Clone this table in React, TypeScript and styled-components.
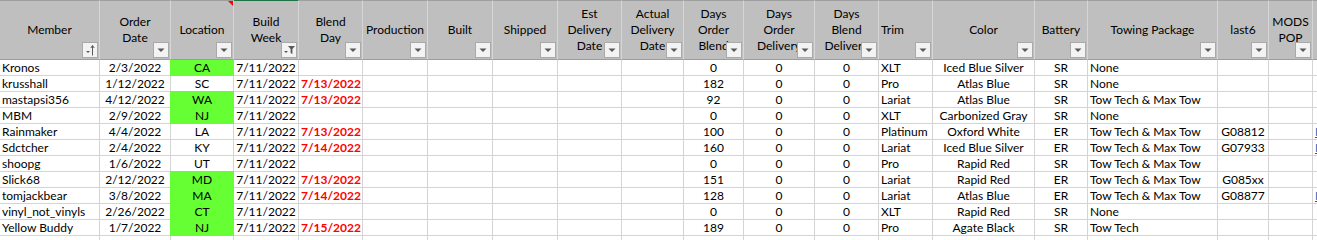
import styled, { createGlobalStyle } from "styled-components";

type Align = "left" | "center";

interface Column {
  lines: string[];
  align: Align;
  headAlign?: Align;
  button?: "sort" | "filter" | "plain" | "none";
}

interface Member {
  name: string;
  ordered: string;
  state: string;
  green: boolean;
  blend: string;
  daysBlend: number;
  trim: string;
  color: string;
  battery: string;
  towing: string;
  last6: string;
  link: boolean;
}

const GREEN = "#66ff33";

const GlobalStyle = createGlobalStyle`
  html, body {
    margin: 0;
    padding: 0;
    background: #ffffff;
    overflow: hidden;
  }
  body {
    font-family: Lato, "Open Sans", sans-serif;
    font-size: 12px;
    color: #000000;
  }
`;

const Sheet = styled.div`
  display: grid;
  grid-template-columns: 100px 71px 63px 65px 64px 65px 65px 65px 64px 62px 60px 71px 64px 54px 102px 53px 130px 51px 44px 1fr;
  grid-template-rows: 60px;
  grid-auto-rows: 16px;
  width: 1317px;
`;

const HeadCell = styled.div<{ $align: Align; $top: string }>`
  position: relative;
  height: 60px;
  box-sizing: border-box;
  background: #bfbfbf;
  border-top: 1px solid ${(p) => p.$top};
  border-bottom: 1px solid #9c9c9c;
  border-right: 1px solid #d6d6d6;
  display: flex;
  flex-direction: column;
  justify-content: center;
  align-items: ${(p) => (p.$align === "left" ? "flex-start" : "center")};
  padding: 0 2px;
  line-height: 15.7px;
  white-space: nowrap;
  overflow: hidden;
`;

const FilterButton = styled.div`
  position: absolute;
  right: 1px;
  bottom: 1px;
  width: 16px;
  height: 16px;
  box-sizing: border-box;
  background: #f3f3f3;
  border: 1px solid #a9a9a9;
  display: flex;
  align-items: center;
  justify-content: center;
`;

const Comment = styled.div`
  position: absolute;
  top: -1px;
  right: 0;
  width: 6px;
  height: 6px;
  background: #ff0000;
  clip-path: polygon(0 0, 100% 0, 100% 100%);
`;

const Cell = styled.div<{ $align: Align; $fill?: string; $first?: boolean }>`
  box-sizing: border-box;
  height: 16px;
  border-right: 1px solid ${(p) => p.$fill ?? "#d4d4d4"};
  border-bottom: 1px solid ${(p) => p.$fill ?? "#d4d4d4"};
  background: ${(p) => p.$fill ?? "transparent"};
  box-shadow: ${(p) =>
    p.$fill
      ? `-1px 0 0 ${p.$fill}${p.$first ? "" : `, 0 -1px 0 ${p.$fill}, -1px -1px 0 ${p.$fill}`}`
      : "none"};
  padding: 0 2px;
  line-height: 15px;
  text-align: ${(p) => p.$align};
  white-space: nowrap;
  overflow: hidden;
`;

const Late = styled.span`
  color: #ff0000;
  font-weight: 700;
`;

const Link = styled.span`
  color: #0563c1;
  text-decoration: underline;
`;

const columns: Column[] = [
  { lines: ["Member"], align: "left", headAlign: "center", button: "sort" },
  { lines: ["Order", "Date"], align: "center" },
  { lines: ["Location"], align: "center" },
  { lines: ["Build", "Week"], align: "center", button: "filter" },
  { lines: ["Blend", "Day"], align: "center" },
  { lines: ["Production"], align: "center" },
  { lines: ["Built"], align: "center" },
  { lines: ["Shipped"], align: "center" },
  { lines: ["Est", "Delivery", "Date"], align: "center" },
  { lines: ["Actual", "Delivery", "Date"], align: "center" },
  { lines: ["Days", "Order", "Blend"], align: "center" },
  { lines: ["Days", "Order", "Delivery"], align: "center" },
  { lines: ["Days", "Blend", "Delivery"], align: "center" },
  { lines: ["Trim"], align: "left" },
  { lines: ["Color"], align: "center" },
  { lines: ["Battery"], align: "center" },
  { lines: ["Towing Package"], align: "left", headAlign: "center" },
  { lines: ["last6"], align: "center" },
  { lines: ["MODS", "POP"], align: "center" },
  { lines: [], align: "left", button: "none" },
];

const m = (
  name: string,
  ordered: string,
  state: string,
  green: boolean,
  blend: string,
  daysBlend: number,
  trim: string,
  color: string,
  battery: string,
  towing: string,
  last6 = "",
  link = false
): Member => ({
  name,
  ordered,
  state,
  green,
  blend,
  daysBlend,
  trim,
  color,
  battery,
  towing,
  last6,
  link,
});

const members: Member[] = [
  m("Kronos", "2/3/2022", "CA", true, "", 0, "XLT", "Iced Blue Silver", "SR", "None"),
  m("krusshall", "1/12/2022", "SC", false, "7/13/2022", 182, "Pro", "Atlas Blue", "SR", "None"),
  m("mastapsi356", "4/12/2022", "WA", true, "7/13/2022", 92, "Lariat", "Atlas Blue", "SR", "Tow Tech & Max Tow"),
  m("MBM", "2/9/2022", "NJ", true, "", 0, "XLT", "Carbonized Gray", "SR", "None"),
  m("Rainmaker", "4/4/2022", "LA", false, "7/13/2022", 100, "Platinum", "Oxford White", "ER", "Tow Tech & Max Tow", "G08812", true),
  m("Sdctcher", "2/4/2022", "KY", false, "7/14/2022", 160, "Lariat", "Iced Blue Silver", "ER", "Tow Tech & Max Tow", "G07933", true),
  m("shoopg", "1/6/2022", "UT", false, "", 0, "Pro", "Rapid Red", "SR", "Tow Tech & Max Tow"),
  m("Slick68", "2/12/2022", "MD", true, "7/13/2022", 151, "Lariat", "Rapid Red", "ER", "Tow Tech & Max Tow", "G085xx"),
  m("tomjackbear", "3/8/2022", "MA", true, "7/14/2022", 128, "Lariat", "Atlas Blue", "ER", "Tow Tech & Max Tow", "G08877", true),
  m("vinyl_not_vinyls", "2/26/2022", "CT", true, "", 0, "XLT", "Rapid Red", "SR", "None"),
  m("Yellow Buddy", "1/7/2022", "NJ", true, "7/15/2022", 189, "Pro", "Agate Black", "SR", "Tow Tech"),
];

function ButtonIcon({ kind }: { kind: "sort" | "filter" | "plain" }) {
  if (kind === "sort") {
    return (
      <svg width="14" height="14" viewBox="0 0 14 14">
        <path d="M3 8h4l-2 2z" fill="#595959" />
        <path d="M9.5 2.5v10" stroke="#595959" strokeWidth="1" />
        <path d="M7.8 5l1.7-2.5L11.2 5" fill="none" stroke="#595959" strokeWidth="1" />
      </svg>
    );
  }
  if (kind === "filter") {
    return (
      <svg width="14" height="14" viewBox="0 0 14 14">
        <path d="M2 8h4l-2 2z" fill="#595959" />
        <path d="M6 3h7l-2.6 3v5l-1.8-1V6z" fill="#595959" />
      </svg>
    );
  }
  return (
    <svg width="14" height="14" viewBox="0 0 14 14">
      <path d="M3.5 5.5h7L7 9z" fill="#595959" />
    </svg>
  );
}

function rowValues(r: Member) {
  return [
    r.name,
    r.ordered,
    r.state,
    "7/11/2022",
    r.blend ? <Late>{r.blend}</Late> : "",
    "",
    "",
    "",
    "",
    "",
    String(r.daysBlend),
    "0",
    "0",
    r.trim,
    r.color,
    r.battery,
    r.towing,
    r.last6,
    "",
    r.link ? <Link>HYPERLINK</Link> : "",
  ];
}

export default function App() {
  return (
    <>
      <GlobalStyle />
      <Sheet>
        {columns.map((c, i) => (
          <HeadCell key={i} $align={c.headAlign ?? c.align} $top={i === 3 ? "#217346" : "#9e9e9e"}>
            {c.lines.map((l) => (
              <span key={l}>{l}</span>
            ))}
            {c.button !== "none" && (
              <FilterButton>
                <ButtonIcon kind={c.button ?? "plain"} />
              </FilterButton>
            )}
            {i === 2 && <Comment />}
          </HeadCell>
        ))}
        {members.map((r, ri) =>
          rowValues(r).map((v, ci) => (
            <Cell
              key={`${ri}-${ci}`}
              $align={columns[ci].align}
              $fill={ci === 2 && r.green ? GREEN : undefined}
              $first={ri === 0}
            >
              {v}
            </Cell>
          ))
        )}
        {columns.map((c, ci) => (
          <Cell key={`blank-${ci}`} $align={c.align} />
        ))}
      </Sheet>
    </>
  );
}
